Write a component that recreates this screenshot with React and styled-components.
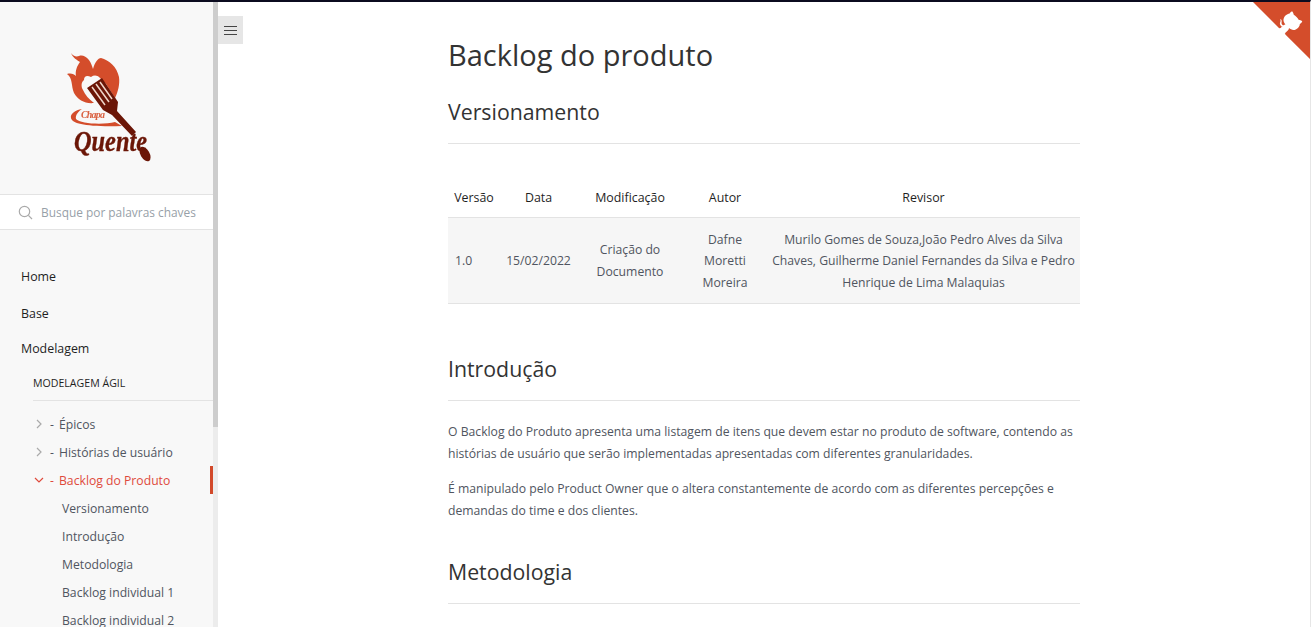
import React from "react";
import styled, { createGlobalStyle } from "styled-components";

const GlobalStyle = createGlobalStyle`
  html, body {
    margin: 0;
    height: 100%;
    overflow: hidden;
    background: #fff;
  }
  * { box-sizing: border-box; }
  body {
    font-family: "Open Sans", "Noto Sans", sans-serif;
    color: #333;
  }
`;

const Page = styled.div`
  position: relative;
  display: flex;
  height: 100vh;
  overflow: hidden;
  border-top: 2px solid #0b0b1f;
  border-right: 1px solid #e6e6e6;
`;

const Sidebar = styled.aside`
  flex: 0 0 213px;
  background: #f8f8f8;
  overflow: hidden;
`;

const Scrollbar = styled.div`
  flex: 0 0 5px;
  background: #ececec;
`;

const ScrollThumb = styled.div`
  height: 425px;
  background: #cdcdcd;
`;

const LogoBox = styled.div`
  height: 192px;
  padding: 50px 0 0 66px;
`;

const LogoSvg = styled.svg`
  display: block;
  filter: blur(0.35px);
`;

const SearchBox = styled.div`
  height: 36px;
  background: #fff;
  border-top: 1px solid #e3e3e3;
  border-bottom: 1px solid #e3e3e3;
  display: flex;
  align-items: center;
  gap: 8px;
  padding-left: 18px;
`;

const SearchText = styled.span`
  font-size: 11.9px;
  color: #979fa8;
  white-space: nowrap;
`;

const Nav = styled.nav`
  padding-top: 29px;
`;

const TopItem = styled.div`
  height: 35px;
  padding-left: 21px;
  font-size: 12.4px;
  font-weight: 500;
  color: #1f1f1f;
  line-height: 35px;
  margin-bottom: ${(p) => p.$gap || 0}px;
`;

const GroupTitle = styled.div`
  margin: 0 0 9px 33px;
  height: 35px;
  line-height: 34px;
  font-size: 10.6px;
  font-weight: 500;
  color: #1f1f1f;
  border-bottom: 1px solid #e3e3e3;
`;

const NavRow = styled.div`
  position: relative;
  height: 28px;
  display: flex;
  align-items: center;
  padding-left: 33px;
  font-size: 12.2px;
  color: ${(p) => (p.$active ? "#df4a3c" : "#505560")};
`;

const ActiveMark = styled.span`
  position: absolute;
  right: 0;
  top: 0;
  width: 3px;
  height: 28px;
  background: #d2492a;
`;

const Chevron = styled.span`
  width: 11px;
  display: flex;
  justify-content: center;
  margin-right: 6px;
`;

const Dash = styled.span`
  width: 9px;
`;

const SubRows = styled.div`
  padding-top: 1px;
`;

const SubRow = styled.div`
  height: 28px;
  line-height: 28px;
  padding-left: 62px;
  font-size: 12.2px;
  color: #505560;
  white-space: nowrap;
`;

const ToggleButton = styled.div`
  position: absolute;
  left: 218px;
  top: 14px;
  width: 25px;
  height: 28px;
  background: #e6e6e6;
  display: flex;
  flex-direction: column;
  justify-content: center;
  align-items: center;
  gap: 3px;
`;

const ToggleLine = styled.span`
  width: 13px;
  height: 1px;
  background: #444;
`;

const Corner = styled.svg`
  position: absolute;
  right: 0;
  top: 0;
`;

const Main = styled.main`
  flex: 1;
  display: flex;
  justify-content: center;
  overflow: hidden;
`;

const Article = styled.article`
  width: 632px;
  padding-top: 33px;
`;

const Title = styled.h1`
  margin: 0;
  font-size: 29px;
  line-height: 40px;
  font-weight: 400;
  color: #333;
`;

const Heading = styled.h2`
  margin: ${(p) => p.$top}px 0 0;
  padding-bottom: 15px;
  font-size: 21.3px;
  line-height: 32px;
  font-weight: 400;
  color: #333;
  border-bottom: 1px solid #e3e3e3;
`;

const Table = styled.table`
  width: 100%;
  margin-top: 36px;
  border-collapse: collapse;
  font-size: 12.2px;
  color: #505560;
  table-layout: fixed;
`;

const Th = styled.th`
  height: 37px;
  font-size: 12.4px;
  font-weight: 500;
  color: #1f1f1f;
  text-align: center;
  padding: 0 0 2px;
  border-bottom: 1px solid #e3e3e3;
  width: ${(p) => p.$w}px;
`;

const Td = styled.td`
  background: #f6f6f6;
  text-align: ${(p) => p.$align || "center"};
  padding: 11px 0 10px ${(p) => p.$pl || 0}px;
  line-height: 21.6px;
  border-bottom: 1px solid #e3e3e3;
`;

const Paragraph = styled.p`
  margin: ${(p) => p.$top}px 0 0;
  font-size: 12.2px;
  line-height: 21.4px;
  color: #505560;
`;

const SearchIcon = () => (
  <svg width="15" height="15" viewBox="0 0 15 15" fill="none" stroke="#aaa" strokeWidth="1.2">
    <circle cx="6.5" cy="6.5" r="5.2" />
    <path d="M10.4 10.4 14 14" />
  </svg>
);

const ChevronRight = () => (
  <svg width="8" height="10" viewBox="0 0 8 10" fill="none" stroke="#aaa" strokeWidth="1.2">
    <path d="M2 1l4 4-4 4" />
  </svg>
);

const ChevronDown = () => (
  <svg width="10" height="8" viewBox="0 0 10 8" fill="none" stroke="#df4a3c" strokeWidth="1.2">
    <path d="M1 2l4 4 4-4" />
  </svg>
);

// coordinates are page pixels, hence the viewBox offset
const Logo = () => (
  <LogoSvg width="88" height="112" viewBox="66 52 88 112">
    <path
      fill="#d44d2b"
      d="M71 53C73 56 76 57 79 56C85 54 90 60 92 66L93 69C95 62 98 58 101 58C109 60 117 67 119 77C120 84 118 92 115 98L106 84L100 78C97 75 94 75 91 77C87 75 84 76 84 80C81 82 81 87 83 90C85 95 89 99 94 103C85 104 78 100 74 93C71 86 73 78 67 74C71 73 74 74 76 76C75 71 77 66 80 62C77 60 73 58 71 53z"
    />
    <path fill="#6b1607" d="M102 78L87 88L103 110L112 115L132 136L136 132L117 111L118 102z" />
    <path stroke="#efd6ca" strokeWidth="1.5" fill="none" d="M92 87L105 105M96 84L109 102M100 82L112 99" />
    <ellipse cx="145" cy="154" rx="4.5" ry="8" transform="rotate(-30 145 154)" fill="#6b1607" />
    <path
      fill="#d44d2b"
      d="M82 109C75 110 70 114 71 118C72 124 88 127 122 126L115 122C104 125 80 124 76 119C75 115 79 111 82 109z"
    />
    <text x="81" y="118" fontFamily="'Liberation Serif', serif" fontStyle="italic" fontWeight="700" fontSize="10" fill="#d95f3f" textLength="24">
      Chapa
    </text>
    <text x="74" y="151" fontFamily="'Liberation Serif', serif" fontStyle="italic" fontWeight="700" fontSize="29" fill="#6b1607" stroke="#6b1607" strokeWidth="0.4" textLength="73" lengthAdjust="spacingAndGlyphs">
      Quente
    </text>
  </LogoSvg>
);

const columns = [
  ["Versão", 52],
  ["Data", 77],
  ["Modificação", 106],
  ["Autor", 84],
  ["Revisor", 313],
];

const navRows = [
  ["Épicos", false],
  ["Histórias de usuário", false],
  ["Backlog do Produto", true],
];

const subRows = ["Versionamento", "Introdução", "Metodologia", "Backlog individual 1", "Backlog individual 2"];

export default function App() {
  return (
    <Page>
      <GlobalStyle />
      <Sidebar>
        <LogoBox>
          <Logo />
        </LogoBox>
        <SearchBox>
          <SearchIcon />
          <SearchText>Busque por palavras chaves</SearchText>
        </SearchBox>
        <Nav>
          <TopItem $gap={2}>Home</TopItem>
          <TopItem>Base</TopItem>
          <TopItem>Modelagem</TopItem>
          <GroupTitle>MODELAGEM ÁGIL</GroupTitle>
          {navRows.map(([label, active]) => (
            <NavRow key={label} $active={active}>
              <Chevron>{active ? <ChevronDown /> : <ChevronRight />}</Chevron>
              <Dash>-</Dash>
              {label}
              {active && <ActiveMark />}
            </NavRow>
          ))}
          <SubRows>
            {subRows.map((label) => (
              <SubRow key={label}>{label}</SubRow>
            ))}
          </SubRows>
        </Nav>
      </Sidebar>
      <Scrollbar>
        <ScrollThumb />
      </Scrollbar>
      <ToggleButton>
        <ToggleLine />
        <ToggleLine />
        <ToggleLine />
      </ToggleButton>
      <Main>
        <Article>
          <Title>Backlog do produto</Title>
          <Heading $top={21}>Versionamento</Heading>
          <Table>
            <thead>
              <tr>
                {columns.map(([label, w]) => (
                  <Th key={label} $w={w}>{label}</Th>
                ))}
              </tr>
            </thead>
            <tbody>
              <tr>
                <Td $align="left" $pl={7}>1.0</Td>
                <Td>15/02/2022</Td>
                <Td>Criação do<br />Documento</Td>
                <Td>Dafne<br />Moretti<br />Moreira</Td>
                <Td>
                  Murilo Gomes de Souza,João Pedro Alves da Silva<br />
                  Chaves, Guilherme Daniel Fernandes da Silva e Pedro<br />
                  Henrique de Lima Malaquias
                </Td>
              </tr>
            </tbody>
          </Table>
          <Heading $top={49}>Introdução</Heading>
          <Paragraph $top={20}>
            O Backlog do Produto apresenta uma listagem de itens que devem estar no produto de software, contendo as
            histórias de usuário que serão implementadas apresentadas com diferentes granularidades.
          </Paragraph>
          <Paragraph $top={14}>
            É manipulado pelo Product Owner que o altera constantemente de acordo com as diferentes percepções e
            demandas do time e dos clientes.
          </Paragraph>
          <Heading $top={35}>Metodologia</Heading>
        </Article>
      </Main>
      <Corner width="57" height="57" viewBox="0 0 250 250">
        <path fill="#d44d2b" d="M0,0 L115,115 L130,115 L142,142 L250,250 L250,0 Z" />
        <path
          fill="#fff"
          d="M128.3,109.0 C113.8,99.7 119.0,89.6 119.0,89.6 C122.0,82.7 120.5,78.6 120.5,78.6 C119.2,72.0 123.4,76.3 123.4,76.3 C127.3,80.9 125.5,87.3 125.5,87.3 C122.9,97.6 130.6,101.9 134.4,103.2"
        />
        <path
          fill="#fff"
          d="M115.0,115.0 C114.9,115.1 118.7,116.5 119.8,115.4 L133.7,101.6 C136.9,99.2 139.9,98.4 142.2,98.6 C133.8,88.0 127.5,74.4 143.8,58.0 C148.5,53.4 154.0,51.2 159.7,51.0 C160.3,49.4 163.2,43.6 171.4,40.1 C171.4,40.1 176.1,42.5 178.8,56.2 C183.1,58.6 187.2,61.8 190.9,65.4 C194.5,69.0 197.7,73.2 200.1,77.6 C213.8,80.2 216.3,84.9 216.3,84.9 C212.7,93.1 206.9,96.0 205.4,96.6 C205.1,102.4 203.0,107.8 198.3,112.5 C181.9,128.9 168.3,122.5 157.7,114.1 C157.9,116.9 156.7,120.9 152.7,124.9 L141.0,136.5 C139.8,137.7 141.6,141.9 141.8,141.8 Z"
        />
      </Corner>
    </Page>
  );
}
